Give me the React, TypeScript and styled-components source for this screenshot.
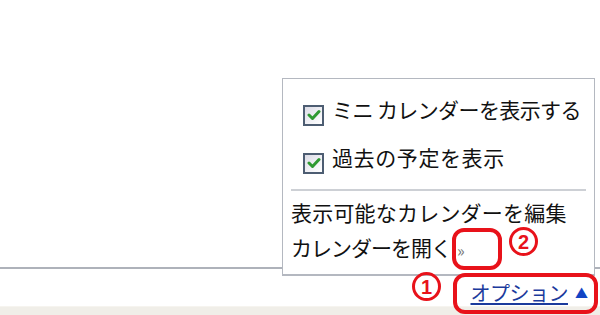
import React from "react";
import styled, {createGlobalStyle} from "styled-components";

const GlobalStyle = createGlobalStyle`
  html, body {
    margin: 0;
    padding: 0;
    background: #fff;
  }
  body {
    width: 600px;
    height: 315px;
    overflow: hidden;
    font-family: "Noto Sans CJK JP", "Liberation Sans", sans-serif;
  }
`;

const Page = styled.div`
  position: relative;
  width: 600px;
  height: 315px;
  display: flex;
  flex-direction: column;
  background: #fff;
`;

const Main = styled.div`
  height: 268px;
  border-bottom: 2px solid #aeb2ba;
`;

const Footer = styled.div`
  height: 37px;
  display: flex;
  align-items: flex-end;
  justify-content: flex-end;
  padding: 0 12px 3px 0;
  box-sizing: border-box;
`;

const Strip = styled.div`
  height: 8px;
  background: #f0eee8;
  border-top: 1px solid #f6f4ef;
`;

const OptionLink = styled.a`
  display: flex;
  align-items: center;
  gap: 7px;
  font-size: 20px;
  line-height: 20px;
  color: #1b3a9c;
  text-decoration: none;
  cursor: pointer;

  span {
    text-decoration: underline;
    text-underline-offset: 2px;
    letter-spacing: -0.5px;
  }
`;

const Triangle = styled.i`
  font-style: normal;
  font-size: 13px;
  color: #1144c4;
`;

const Menu = styled.div`
  position: absolute;
  left: 282px;
  top: 78px;
  width: 313px;
  height: 198px;
  box-sizing: border-box;
  border: 1px solid #b4b8c0;
  border-bottom-width: 2px;
  background: #fff;
  display: flex;
  flex-direction: column;
  padding: 6px 8px 0 8px;
`;

const CheckRow = styled.label`
  height: 48px;
  display: flex;
  align-items: center;
  gap: 8px;
  padding-left: ${p => p.$indent}px;
  font-size: 21px;
  line-height: 24px;
  color: #111;
  letter-spacing: ${p => p.$spacing ?? 0}px;
  white-space: nowrap;
`;

const Box = styled.span`
  width: 21px;
  height: 21px;
  margin-top: 12px;
  box-sizing: border-box;
  border: 2px solid #4d5d72;
  background: linear-gradient(135deg, #dcdce6 0%, #f2f2f6 60%, #ffffff 100%);
  display: flex;
  align-items: center;
  justify-content: center;
  flex: none;
`;

const Separator = styled.hr`
  border: none;
  height: 2px;
  background: #cdd0d5;
  margin: 8px 0 4px 0;
`;

const MenuItem = styled.div`
  height: 35px;
  display: flex;
  align-items: center;
  font-size: 21px;
  line-height: 23px;
  color: #111;
  letter-spacing: ${p => p.$spacing ?? 0}px;
  white-space: nowrap;
`;

const More = styled.span`
  font-size: 16px;
  color: #777;
  margin-left: 6px;
  margin-top: 5px;
`;

const Ring = styled.div`
  position: absolute;
  border: 4px solid #e8121a;
  border-radius: 12px;
  box-sizing: border-box;
`;

const Mark = styled.div`
  position: absolute;
  width: 29px;
  height: 29px;
  box-sizing: border-box;
  border: 3.5px solid #e8121a;
  border-radius: 50%;
  display: flex;
  align-items: center;
  justify-content: center;
  font-family: "Liberation Sans", sans-serif;
  font-size: 20px;
  line-height: 20px;
  font-weight: 700;
  color: #e8121a;
`;

const Check = () => (
  <svg width="14" height="12" viewBox="0 0 14 12">
    <path d="M2 6 L5.5 9.5 L12 2.5" fill="none" stroke="#2f9a32" strokeWidth="3" strokeLinecap="round" strokeLinejoin="round"/>
  </svg>
);

export default function App() {
  return (
    <>
      <GlobalStyle/>
      <Page>
        <Main/>
        <Footer>
          <OptionLink>
            <span>オプション</span>
            <Triangle>▲</Triangle>
          </OptionLink>
        </Footer>
        <Strip/>

        <Menu>
          <CheckRow $indent={12} $spacing={-0.6}>
            <Box><Check/></Box>
            ミニ カレンダーを表示する
          </CheckRow>
          <CheckRow $indent={12} $spacing={0.6}>
            <Box><Check/></Box>
            過去の予定を表示
          </CheckRow>
          <Separator/>
          <MenuItem $spacing={0.2}>表示可能なカレンダーを編集</MenuItem>
          <MenuItem $spacing={-1}>
            カレンダーを開く
            <More>»</More>
          </MenuItem>
        </Menu>

        <Ring style={{left: 452, top: 228, width: 50, height: 42}}/>
        <Mark style={{left: 509, top: 227}}>2</Mark>
        <Mark style={{left: 412, top: 272}}>1</Mark>
        <Ring style={{left: 453, top: 273, width: 145, height: 41}}/>
      </Page>
    </>
  );
}
